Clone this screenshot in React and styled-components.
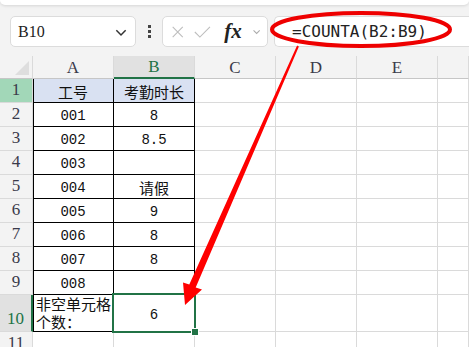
import React from 'react'
import styled, { createGlobalStyle, css } from 'styled-components'

const GlobalStyle = createGlobalStyle`
  html, body {
    margin: 0;
    padding: 0;
    background: #fff;
    overflow: hidden;
  }
`

const green = '#217346'
const gridLine = '#dadada'

const Page = styled.div`
  position: relative;
  width: 469px;
  height: 347px;
  overflow: hidden;
  background: #f3f3f3;
  font-family: "Liberation Sans", "Noto Sans CJK SC", sans-serif;
`

const TopStrip = styled.div`
  height: 5px;
  background: #fff;
  border-radius: 0 0 6px 6px;
  box-shadow: 0 1px 3px rgba(0, 0, 0, 0.12);
`

const Toolbar = styled.div`
  display: flex;
  align-items: center;
  height: 51px;
  padding: 2px 0 0 10px;
  box-sizing: border-box;
`

const Box = styled.div`
  display: flex;
  align-items: center;
  height: 31px;
  background: #fff;
  border: 1px solid #dcdcdc;
  border-radius: 5px;
  box-sizing: border-box;
`

const NameBox = styled(Box)`
  width: 126px;
  padding: 0 7px;
  justify-content: space-between;
  font-family: "Liberation Serif", serif;
  font-size: 16px;
  color: #222;
`

const Dots = styled.div`
  width: 26px;
  display: flex;
  flex-direction: column;
  align-items: center;
  gap: 2px;
  span {
    width: 3px;
    height: 3px;
    background: #444;
  }
`

const FxBox = styled(Box)`
  width: 106px;
  padding: 0 6px 0 8px;
  gap: 10px;
  .fx {
    font-family: "Liberation Serif", serif;
    font-style: italic;
    font-weight: 600;
    font-size: 21px;
    color: #222;
    margin-left: 3px;
  }
`

const FormulaBox = styled(Box)`
  flex: 1;
  margin-left: 6px;
  border-radius: 5px 0 0 5px;
  border-right: none;
  padding-left: 17px;
  font-family: "DejaVu Sans Mono", monospace;
  font-size: 16px;
  color: #222;
`

const Sheet = styled.div`
  display: grid;
  grid-template-columns: 33px repeat(5, 81px) 1fr;
  grid-template-rows: 23px repeat(9, 24px) 37px 24px;
  background: #fff;
`

const Corner = styled.div`
  position: relative;
  background: #f3f3f3;
  border-right: 1px solid ${gridLine};
  border-bottom: 1px solid #c6c6c6;
  box-sizing: border-box;
  &::after {
    content: '';
    position: absolute;
    right: 3px;
    bottom: 3px;
    border-style: solid;
    border-width: 0 0 14px 14px;
    border-color: transparent transparent #dedede transparent;
  }
`

const ColHead = styled.div`
  display: flex;
  align-items: center;
  justify-content: center;
  background: ${p => (p.$active ? '#e1e1e1' : '#f3f3f3')};
  border-right: 1px solid ${gridLine};
  border-bottom: ${p => (p.$active ? `2px solid ${green}` : '1px solid #c6c6c6')};
  box-sizing: border-box;
  font-family: "Liberation Serif", serif;
  font-size: 17px;
  color: ${p => (p.$active ? green : '#3a3a4a')};
  padding-top: 1px;
`

const RowHead = styled.div`
  display: flex;
  align-items: flex-end;
  justify-content: center;
  padding-bottom: 2px;
  background: ${p => (p.$active ? '#e1e1e1' : p.$hl ? '#a2d7b8' : '#f3f3f3')};
  border-right: ${p => (p.$active ? `2px solid ${green}` : `1px solid ${gridLine}`)};
  border-bottom: 1px solid ${gridLine};
  box-sizing: border-box;
  font-family: "Liberation Serif", serif;
  font-size: 17px;
  line-height: 20px;
  color: ${p => (p.$active ? green : '#3a3a4a')};
`

const Cell = styled.div`
  position: relative;
  display: flex;
  align-items: center;
  justify-content: ${p => (p.$left ? 'flex-start' : 'center')};
  padding: ${p => (p.$left ? '0 0 0 3px' : '3px 0 0 0')};
  box-sizing: border-box;
  background: ${p => p.$bg || '#fff'};
  border-right: 1px solid ${p => (p.$table ? '#000' : gridLine)};
  border-bottom: 1px solid ${p => (p.$table ? '#000' : gridLine)};
  ${p => p.$leftEdge && css`box-shadow: inset 1px 0 0 #000;`}
  font-family: ${p => (p.$cjk ? '"Noto Sans CJK SC", sans-serif' : '"Liberation Mono", monospace')};
  font-size: ${p => (p.$cjk ? '15px' : '14px')};
  line-height: 18px;
  color: #111;
  ${p => p.$selected && css`
    z-index: 2;
    &::after {
      content: '';
      position: absolute;
      left: -2px;
      top: -2px;
      right: -2px;
      bottom: -2px;
      border: 2px solid ${green};
    }
    &::before {
      content: '';
      position: absolute;
      right: -5px;
      bottom: -5px;
      width: 6px;
      height: 6px;
      background: ${green};
      border: 1px solid #fff;
      z-index: 3;
    }
  `}
`

const Overlay = styled.svg`
  position: absolute;
  left: 0;
  top: 0;
  pointer-events: none;
  z-index: 10;
`

const data = [
  ['工号', '考勤时长'],
  ['001', '8'],
  ['002', '8.5'],
  ['003', ''],
  ['004', '请假'],
  ['005', '9'],
  ['006', '8'],
  ['007', '8'],
  ['008', ''],
  ['非空单元格个数：', '6'],
]

const cjk = s => /[\u4e00-\u9fff]/.test(s)

const Chevron = ({ size = 12, color = '#444' }) => (
  <svg width={size} height={size} viewBox="0 0 12 12">
    <path d="M2 4.5 L6 8.5 L10 4.5" fill="none" stroke={color} strokeWidth="1.3" />
  </svg>
)

const App = () => {
  const cols = ['A', 'B', 'C', 'D', 'E', '']
  return (
    <Page>
      <GlobalStyle />
      <TopStrip />
      <Toolbar>
        <NameBox>
          <span>B10</span>
          <Chevron size={14} color="#333" />
        </NameBox>
        <Dots>
          <span />
          <span />
          <span />
        </Dots>
        <FxBox>
          <svg width="16" height="16" viewBox="0 0 16 16">
            <path d="M2 2 L14 14 M14 2 L2 14" stroke="#bdbdbd" strokeWidth="1.3" fill="none" />
          </svg>
          <svg width="20" height="16" viewBox="0 0 20 16">
            <path d="M1 8 L7 14 L19 2" stroke="#bdbdbd" strokeWidth="1.3" fill="none" />
          </svg>
          <span className="fx">fx</span>
          <Chevron size={11} color="#aaa" />
        </FxBox>
        <FormulaBox>=COUNTA(B2:B9)</FormulaBox>
      </Toolbar>
      <Sheet>
        <Corner />
        {cols.map((c, i) => (
          <ColHead key={i} $active={c === 'B'}>{c}</ColHead>
        ))}
        {data.map((row, r) => (
          <React.Fragment key={r}>
            <RowHead $active={r === 9} $hl={r === 0}>{r + 1}</RowHead>
            {row.map((v, c) => (
              <Cell
                key={c}
                $table
                $leftEdge={c === 0}
                $cjk={cjk(v)}
                $left={r === 9 && c === 0}
                $bg={r === 0 ? '#d9e1f2' : undefined}
                $selected={r === 9 && c === 1}
              >
                {v}
              </Cell>
            ))}
            {[0, 1, 2, 3].map(k => (
              <Cell key={'e' + k} />
            ))}
          </React.Fragment>
        ))}
        <RowHead>11</RowHead>
        {[0, 1, 2, 3, 4, 5].map(k => (
          <Cell key={'r' + k} />
        ))}
      </Sheet>
      <Overlay width="469" height="347" viewBox="0 0 469 347">
        <ellipse cx="361" cy="29.5" rx="89" ry="16.5" fill="none" stroke="#ee0000" strokeWidth="4" />
        <polygon
          points="297.1,45.6 298.9,46.4 195.7,287.4 202,289.5 185,305 183,282.5 189.3,284.6"
          fill="#ff0000"
        />
      </Overlay>
    </Page>
  )
}

export default App
